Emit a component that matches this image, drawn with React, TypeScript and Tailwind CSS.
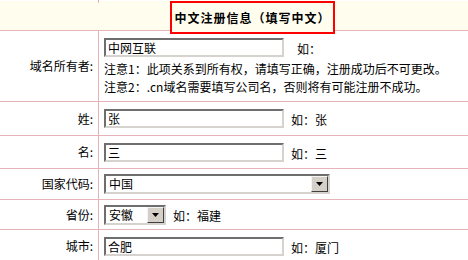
const line = 'border-[#e5b3b8]';

function TextBox({ value }: { value: string }) {
  return (
    <div className="w-[180px] h-[19px] border-2 border-t-[#6e6e6e] border-l-[#6e6e6e] border-b-[#d6d3ce] border-r-[#d6d3ce] bg-white pl-[2px] leading-[15px] text-black">
      {value}
    </div>
  );
}

function SelectBox({ value, width }: { value: string; width: string }) {
  return (
    <div className={`${width} h-[20px] flex border-2 border-t-[#6e6e6e] border-l-[#6e6e6e] border-b-[#d6d3ce] border-r-[#d6d3ce] bg-white`}>
      <span className="flex-1 pl-[3px] leading-[16px]">{value}</span>
      <span className="w-[17px] h-[16px] flex items-center justify-center bg-[#d4d0c8] border border-t-[#f4f4f4] border-l-[#f4f4f4] border-b-[#404040] border-r-[#404040]">
        <svg width="7" height="4" viewBox="0 0 7 4">
          <path d="M0 0h7L3.5 4z" fill="#000" />
        </svg>
      </span>
    </div>
  );
}

function Row({ label, h, children }: { label: string; h: string; children: React.ReactNode }) {
  return (
    <div className={`flex border-b ${line} ${h}`}>
      <div className={`w-[99px] shrink-0 border-r ${line} flex items-center justify-end pr-[5px]`}>{label}</div>
      <div className="flex items-center pl-[5px] gap-[7px]">{children}</div>
    </div>
  );
}

export default function App() {
  return (
    <div className="w-[468px] h-[260px] overflow-hidden bg-white text-[12px] text-black font-['Noto_Sans_CJK_SC','Noto_Sans',sans-serif]">
      <div className={`flex h-[4px] border-b ${line}`}>
        <div className={`w-[99px] border-r ${line}`} />
      </div>
      <div className={`h-[30px] bg-[#fffdee] border-b ${line}`}>
        <div className="relative -mt-[3px] ml-[170px] w-[165px] h-[33px] border-2 border-[#ff0000] bg-[#fffdee] flex items-center justify-center font-bold tracking-[1px]">
          中文注册信息（填写中文）
        </div>
      </div>
      <div className={`flex border-b ${line} h-[71px]`}>
        <div className={`w-[99px] shrink-0 border-r ${line} flex items-center justify-end pr-[5px]`}>域名所有者:</div>
        <div className="pl-[5px] pt-[6px]">
          <div className="flex items-center h-[20px] gap-[13px]">
            <TextBox value="中网互联" />
            <span className="mt-[4px]">如：</span>
          </div>
          <p className="leading-[18px] mt-[3px]">注意1：此项关系到所有权，请填写正确，注册成功后不可更改。</p>
          <p className="leading-[18px]">注意2：.cn域名需要填写公司名，否则将有可能注册不成功。</p>
        </div>
      </div>
      <Row label="姓:" h="h-[34px]">
        <TextBox value="张" />
        <span className="mt-[3px]">如：张</span>
      </Row>
      <Row label="名:" h="h-[33px]">
        <TextBox value="三" />
        <span className="mt-[3px]">如：三</span>
      </Row>
      <Row label="国家代码:" h="h-[31px]">
        <SelectBox value="中国" width="w-[226px]" />
      </Row>
      <Row label="省份:" h="h-[30px]">
        <SelectBox value="安徽" width="w-[62px]" />
        <span className="mt-[2px]">如：福建</span>
      </Row>
      <Row label="城市:" h="h-[33px]">
        <TextBox value="合肥" />
        <span className="mt-[3px]">如：厦门</span>
      </Row>
    </div>
  );
}
